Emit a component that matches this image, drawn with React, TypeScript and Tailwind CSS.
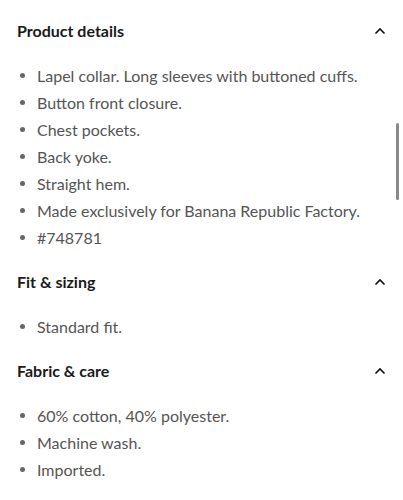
import React from 'react';

type Section = { title: string; items: string[] };

const sections: Section[] = [
  {
    title: 'Product details',
    items: [
      'Lapel collar. Long sleeves with buttoned cuffs.',
      'Button front closure.',
      'Chest pockets.',
      'Back yoke.',
      'Straight hem.',
      'Made exclusively for Banana Republic Factory.',
      '#748781',
    ],
  },
  { title: 'Fit & sizing', items: ['Standard fit.'] },
  {
    title: 'Fabric & care',
    items: ['60% cotton, 40% polyester.', 'Machine wash.', 'Imported.'],
  },
];

const ChevronUp = () => (
  <svg width="12" height="8" viewBox="0 0 12 8" fill="none" stroke="#111" strokeWidth="1.6">
    <path d="M1.5 6.5 L6 2 L10.5 6.5" />
  </svg>
);

export default function App() {
  return (
    <div className="relative w-[403px] h-[500px] bg-white overflow-hidden" style={{ fontFamily: 'Lato, "Open Sans", sans-serif' }}>
      <div className="flex flex-col pl-[17px] pr-[17px] pt-[21px]">
        {sections.map((s) => (
          <div key={s.title} className="flex flex-col">
            <div className="flex items-center justify-between h-[20px]">
              <span className="text-[16px] font-bold text-[#1a1a1a] leading-[20px]">{s.title}</span>
              <ChevronUp />
            </div>
            <ul className="flex flex-col pt-[20.5px] pb-[21.5px]">
              {s.items.map((it) => (
                <li key={it} className="flex items-center h-[27px]">
                  <span className="w-[5px] h-[5px] rounded-full bg-[#666] ml-[3px] mr-[12px]" />
                  <span className="text-[16px] text-[#555] leading-[27px]">{it}</span>
                </li>
              ))}
            </ul>
          </div>
        ))}
      </div>
      {/* scroll indicator */}
      <div className="absolute right-[4px] top-[123px] w-[3px] h-[77px] rounded-full bg-[#8a8a8a]" />
    </div>
  );
}
